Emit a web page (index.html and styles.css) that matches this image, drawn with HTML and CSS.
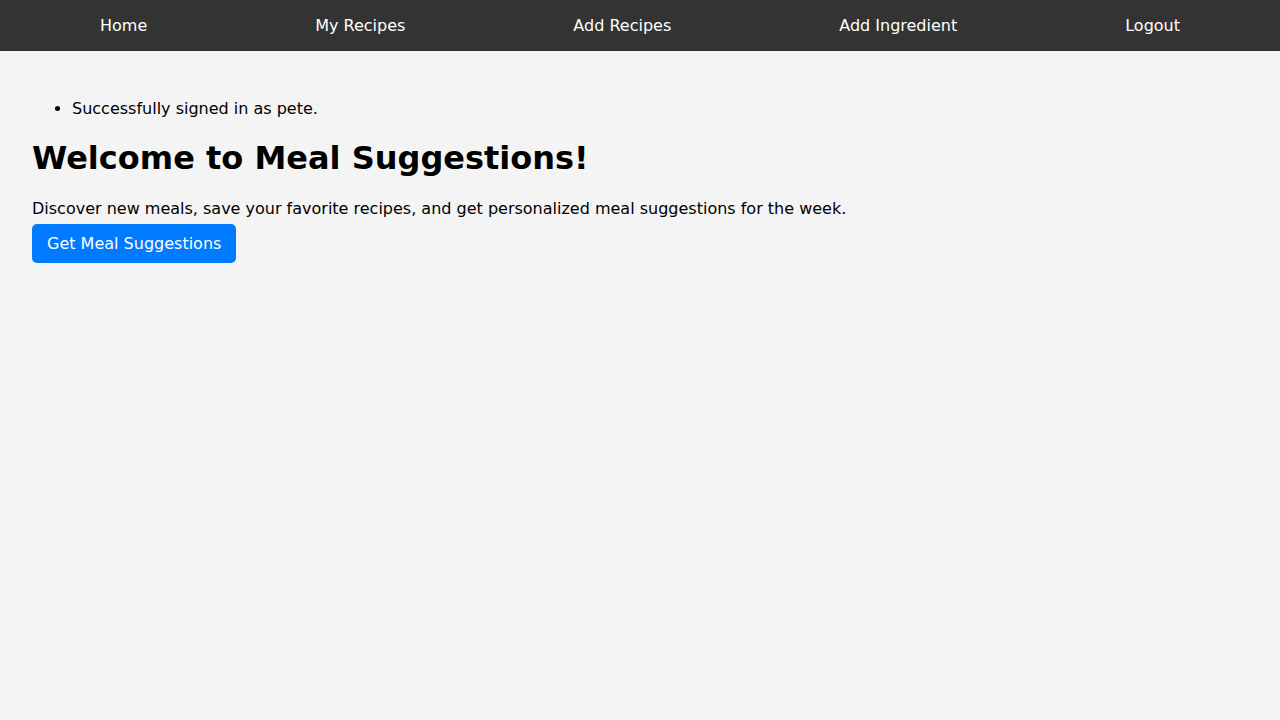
FILE: index.html
```html
<!DOCTYPE html>
<html lang="en">
<head>
<meta charset="utf-8">
<title>Meal Suggestions</title>
<link rel="stylesheet" href="styles.css">
</head>
<body>
<nav class="navbar">
  <a href="#" class="nav-link">Home</a>
  <a href="#" class="nav-link">My Recipes</a>
  <a href="#" class="nav-link">Add Recipes</a>
  <a href="#" class="nav-link">Add Ingredient</a>
  <a href="#" class="nav-link">Logout</a>
</nav>
<main class="content">
  <ul class="messages">
    <li>Successfully signed in as pete.</li>
  </ul>
  <h1 class="title">Welcome to Meal Suggestions!</h1>
  <p class="intro">Discover new meals, save your favorite recipes, and get personalized meal suggestions for the week.</p>
  <a href="#" class="btn">Get Meal Suggestions</a>
</main>
</body>
</html>
```
FILE: styles.css
```css
html, body {
  margin: 0;
  padding: 0;
}
body {
  background: #f4f4f4;
  color: #000;
  font-family: "DejaVu Sans", sans-serif;
  font-size: 16px;
}
.navbar {
  display: flex;
  justify-content: space-around;
  align-items: center;
  height: 51px;
  padding: 0 16px;
  background: #333333;
}
.nav-link {
  color: #ffffff;
  text-decoration: none;
}
.content {
  padding: 32px;
}
.messages {
  margin: 16px 0;
  padding-left: 40px;
}
.title {
  font-size: 32px;
  margin: 21px 0;
}
.intro {
  margin: 22px 0 6px;
}
.btn {
  display: inline-block;
  background: #007bff;
  color: #ffffff;
  text-decoration: none;
  padding: 10px 15px;
  border-radius: 5px;
}
```
